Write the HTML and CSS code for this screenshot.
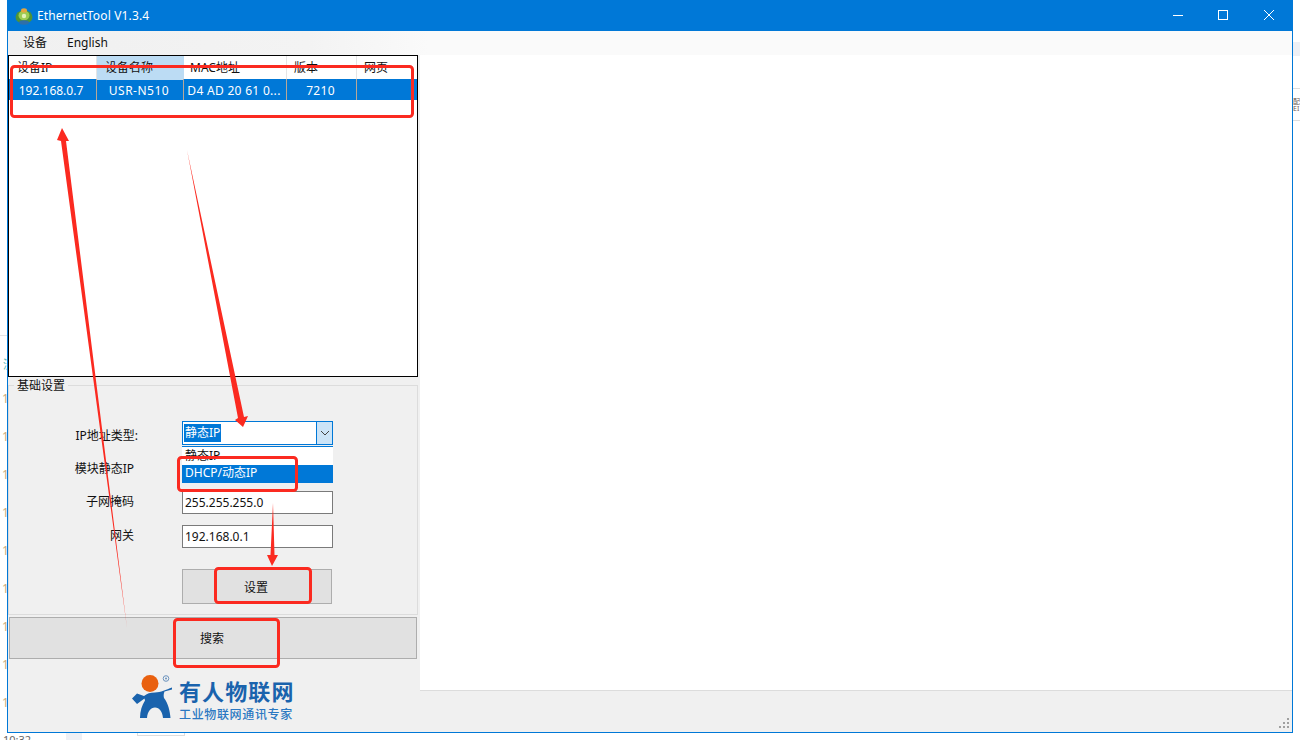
FILE: index.html
```html
<!DOCTYPE html>
<html lang="zh">
<head>
<meta charset="utf-8">
<title>EthernetTool V1.3.4</title>
<link rel="stylesheet" href="styles.css">
</head>
<body>
<div class="desktop">
  <div class="bg-nums">
    <span>1</span><span>1</span><span>1</span><span>1</span><span>1</span><span>1</span><span>1</span><span>1</span><span>1</span>
  </div>
  <span class="bg-glyph">済</span>
  <span class="bg-time">10:32</span>
  <div class="bg-tab"></div>
  <div class="bg-box"></div>
  <div class="bg-right-tab"></div>
  <div class="bg-right-line one"></div>
  <div class="bg-right-text">配置<br>EI</div>
  <div class="bg-right-line two"></div>
  <div class="bg-left-line"></div>

  <div class="window">
    <header class="titlebar">
      <svg class="app-icon" width="18" height="18" viewBox="0 0 18 18">
        <ellipse cx="9" cy="10" rx="8.500" ry="6.800" fill="#4f9436"/>
        <ellipse cx="9" cy="8.500" rx="5.500" ry="4.800" fill="#9ccc52"/>
        <ellipse cx="9" cy="3.400" rx="3" ry="2.200" fill="#e3a63f"/>
        <ellipse cx="9" cy="15.500" rx="5" ry="2.200" fill="#2f6fa8"/>
        <circle cx="9" cy="9" r="2.200" fill="#e2f2b8"/>
      </svg>
      <span class="title">EthernetTool V1.3.4</span>
      <div class="win-controls">
        <svg width="46" height="31" viewBox="0 0 46 31"><path d="M19 15.500H29" stroke="#fff" fill="none"/></svg>
        <svg width="46" height="31" viewBox="0 0 46 31"><rect x="18.500" y="10.500" width="9" height="9" stroke="#fff" fill="none"/></svg>
        <svg width="46" height="31" viewBox="0 0 46 31"><path d="M18 10L28 20M28 10L18 20" stroke="#fff" fill="none"/></svg>
      </div>
    </header>
    <nav class="menubar">
      <span class="menu-item">设备</span>
      <span class="menu-item">English</span>
    </nav>
    <div class="main">
      <aside class="left">
        <div class="list">
          <div class="list-row list-head">
            <span class="cell c1">设备IP</span>
            <span class="cell c2 active">设备名称</span>
            <span class="cell c3">MAC地址</span>
            <span class="cell c4">版本</span>
            <span class="cell c5">网页</span>
          </div>
          <div class="list-row list-sel">
            <span class="cell c1">192.168.0.7</span>
            <span class="cell c2">USR-N510</span>
            <span class="cell c3">D4 AD 20 61 0...</span>
            <span class="cell c4">7210</span>
            <span class="cell c5"></span>
          </div>
        </div>
        <section class="group">
          <span class="legend">基础设置</span>
          <div class="form">
            <span class="label wide">IP地址类型:</span>
            <div class="combo">
              <span class="combo-text"><span class="combo-sel">静态IP</span></span>
              <span class="combo-btn">
                <svg width="10" height="6" viewBox="0 0 10 6"><path d="M1 1L5 5L9 1" stroke="#444" fill="none"/></svg>
              </span>
              <div class="dropdown">
                <div class="opt">静态IP</div>
                <div class="opt on">DHCP/动态IP</div>
              </div>
            </div>
            <span class="label second">模块静态IP</span>
            <div class="field"></div>
            <span class="label">子网掩码</span>
            <div class="field">255.255.255.0</div>
            <span class="label">网关</span>
            <div class="field">192.168.0.1</div>
            <span></span>
            <div class="btn set-btn">设置</div>
          </div>
        </section>
        <div class="btn search-btn"><span class="search-label">搜索</span></div>
        <div class="logo">
          <svg class="logo-mark" width="46" height="46" viewBox="0 0 46 46">
            <path d="M42 12.500V14.500L34.500 16.500C33.500 19 33.500 21 34 23C38 28 40 36 40.500 43H33C32.500 37 29.500 32.500 25 32.500C20.500 32.500 17.500 37 17 43H10C10 36 12 30 15 25.500L14.500 23.500L7 29L2 23.500L7 18.500L14 21C17 18.500 20 17.500 25 17.500C31 17.500 36 14.500 42 12.500Z" fill="#1a63ad"/>
            <circle cx="20" cy="8.500" r="8.500" fill="#e9600f"/>
            <circle cx="36" cy="3.500" r="2.800" fill="none" stroke="#6c93bd" stroke-width="1"/>
            <circle cx="36" cy="3.500" r="1" fill="#6c93bd"/>
          </svg>
          <div class="logo-text">
            <div class="logo-main">有人物联网</div>
            <div class="logo-sub">工业物联网通讯专家</div>
          </div>
        </div>
      </aside>
      <div class="right">
        <div class="content"></div>
        <footer class="status">
          <svg class="grip" width="12" height="12" viewBox="0 0 12 12" fill="#a0a0a0">
            <rect x="8" y="0" width="2" height="2"/>
            <rect x="4" y="4" width="2" height="2"/><rect x="8" y="4" width="2" height="2"/>
            <rect x="0" y="8" width="2" height="2"/><rect x="4" y="8" width="2" height="2"/><rect x="8" y="8" width="2" height="2"/>
          </svg>
        </footer>
      </div>
    </div>
  </div>

  <svg class="marks" width="1300" height="740" viewBox="0 0 1300 740">
    <g fill="none" stroke="#fb2a20" stroke-width="3">
      <rect x="11.500" y="66.500" width="401" height="50" rx="3"/>
      <rect x="178.500" y="457.500" width="118" height="33" rx="3"/>
      <rect x="215.500" y="568.500" width="95" height="34" rx="3"/>
      <rect x="174.500" y="619.500" width="104" height="47" rx="3"/>
    </g>
    <g fill="#fb2a20">
      <path d="M127 628L66 141L69 141L62 128L57 140L61 141Z"/>
      <path d="M187 150L238 418L235 420L243 427L248 416L244 417Z"/>
      <path d="M273 503L270.500 555L267 555L272 566L278 555L274.500 555Z"/>
    </g>
  </svg>
</div>
</body>
</html>
```
FILE: styles.css
```css
* { box-sizing: border-box; }
html, body { margin: 0; padding: 0; }
body {
  font-family: "Noto Sans", "Noto Sans CJK SC", sans-serif;
  font-size: 12px;
  color: #111;
  background: #fff;
}
.desktop {
  position: relative;
  width: 1300px;
  height: 740px;
  overflow: hidden;
  background: #fff;
}

/* what shows of the windows behind */
.bg-nums {
  position: absolute;
  left: 2px;
  top: 391px;
  display: flex;
  flex-direction: column;
  gap: 22px;
  color: #c9ab80;
  font-size: 12px;
  line-height: 16px;
}
.bg-glyph { position: absolute; left: 3px; top: 357px; width: 5px; overflow: hidden; color: #55b3b0; font-size: 12px; line-height: 16px; }
.bg-time { position: absolute; left: 3px; top: 733px; color: #666; font-size: 11px; line-height: 14px; }
.bg-tab { position: absolute; left: 66px; top: 733px; width: 16px; height: 7px; background: #eef0f5; }
.bg-box { position: absolute; left: 137px; top: 733px; width: 48px; height: 3px; border: 1px solid #ddd; border-top: 0; }
.bg-right-tab { position: absolute; left: 1293px; top: 42px; width: 7px; height: 14px; background: #eef0f5; }
.bg-right-line { position: absolute; left: 1293px; width: 7px; height: 1px; background: #ddd; }
.bg-right-line.one { top: 88px; }
.bg-right-line.two { top: 120px; }
.bg-right-text { position: absolute; left: 1293px; top: 98px; width: 7px; overflow: hidden; white-space: nowrap; font-size: 7px; line-height: 7px; color: #6b5a50; }
.bg-left-line { position: absolute; left: 0; top: 335px; width: 7px; height: 1px; background: #e4e4e4; }

/* window */
.window {
  position: absolute;
  left: 7px;
  top: 0;
  width: 1286px;
  height: 733px;
  display: flex;
  flex-direction: column;
  border: 1px solid #0078d7;
  border-top: 0;
  background: #f0f0f0;
}
.titlebar {
  height: 31px;
  flex: none;
  display: flex;
  align-items: center;
  padding-left: 7px;
  background: #0078d7;
  color: #fff;
}
.app-icon { flex: none; }
.title { margin-left: 4px; font-size: 12px; letter-spacing: .15px; }
.win-controls { margin-left: auto; display: flex; }
.win-controls svg { display: block; }
.menubar {
  height: 24px;
  flex: none;
  display: flex;
  align-items: center;
  padding-left: 7px;
  background: linear-gradient(to right, #f0f0f0 0, #f3f3f3 300px, #fafafa 420px);
}
.menu-item { padding: 0 8px; margin-right: 4px; line-height: 22px; }
.main { flex: 1; display: flex; min-height: 0; }
.left { width: 412px; flex: none; display: flex; flex-direction: column; }
.right { flex: 1; display: flex; flex-direction: column; min-width: 0; }
.content { flex: 1; background: #fff; }
.status {
  position: relative;
  height: 42px;
  flex: none;
  background: #f0f0f0;
  border-top: 1px solid #dcdcdc;
}
.grip { position: absolute; right: 1px; bottom: 2px; }

/* device list */
.list {
  width: 410px;
  height: 322px;
  flex: none;
  border: 1px solid #000;
  background: #fff;
}
.list-row { display: grid; grid-template-columns: 88px 87px 103px 70px 60px; }
.list-head { height: 23px; }
.list-head .cell { padding-left: 8px; line-height: 24px; border-right: 1px solid #e5e5e5; }
.list-head .cell.c3 { padding-left: 6px; }
.list-head .cell.c4, .list-head .cell.c5 { padding-left: 7px; }
.list-head .cell.c5 { border-right: 0; }
.list-head .cell.active { background: #bcdcf4; border-right: 0; }
.list-sel { height: 21px; background: #0078d7; color: #fff; }
.list-sel .cell {
  padding-right: 2px;
  line-height: 23px;
  letter-spacing: .3px;
  text-align: center;
  border-right: 1px solid #b8a898;
  white-space: nowrap;
  overflow: hidden;
}
.list-sel .cell.c1 { padding-right: 3px; letter-spacing: 0; }
.list-sel .cell.c2 { letter-spacing: .5px; }
.list-sel .cell.c5 { border-right: 0; }

/* settings group */
.group {
  position: relative;
  height: 230px;
  margin-top: 8px;
  flex: none;
  width: 410px;
  border: 1px solid #dcdcdc;
}
.legend {
  position: absolute;
  left: 5px;
  top: -7px;
  padding: 0 3px;
  background: #f0f0f0;
  line-height: 14px;
}
.form {
  display: grid;
  grid-template-columns: 173px 151px;
  grid-template-rows: 24px 24px 23px 23px 35px;
  row-gap: 11px;
  padding-top: 35px;
}
.label { justify-self: end; padding-right: 48px; line-height: 18px; padding-top: 2px; white-space: nowrap; }
.label.wide { padding-right: 44px; padding-top: 6px; }
.label.second { padding-top: 4px; }
.field {
  height: 23px;
  padding-left: 2px;
  line-height: 22px;
  background: #fff;
  border: 1px solid #7a7a7a;
}
.combo {
  position: relative;
  display: flex;
  height: 24px;
  border: 1px solid #0078d7;
  background: #fff;
}
.combo-text { flex: 1; padding: 2px 1px; line-height: 18px; }
.combo-sel { display: inline-block; padding: 0 1px; background: #0078d7; color: #fff; line-height: 18px; }
.combo-btn {
  flex: none;
  width: 16px;
  display: flex;
  align-items: center;
  justify-content: center;
  background: #cce4f7;
  border-left: 1px solid #0078d7;
}
.dropdown {
  position: absolute;
  left: -1px;
  right: -1px;
  top: 24px;
  border-top: 1px solid #0078d7;
  background: #fff;
}
.opt { height: 18px; padding-left: 3px; line-height: 17px; }
.opt.on { background: #0078d7; color: #fff; line-height: 16px; }
.btn { background: #e1e1e1; border: 1px solid #adadad; }
.set-btn {
  width: 150px;
  height: 35px;
  margin-top: 10px;
  display: flex;
  align-items: center;
  justify-content: center;
  padding-right: 2px;
}
.search-btn {
  width: 408px;
  height: 42px;
  flex: none;
  margin: 2px 0 0 1px;
  padding: 11px 0 0 190px;
  line-height: 20px;
}

/* logo */
.logo { display: flex; align-items: flex-start; margin: 16px 0 0 122px; }
.logo-mark { flex: none; }
.logo-text { margin-left: 3px; color: #1a63ad; }
.logo-main { font-family: "Noto Sans CJK SC", sans-serif; font-size: 22px; font-weight: 700; line-height: 30px; letter-spacing: 1.1px; white-space: nowrap; }
.logo-sub { margin-top: 0; font-family: "Noto Sans CJK SC", sans-serif; font-size: 12px; font-weight: 500; line-height: 18px; color: #2a78c2; letter-spacing: .65px; white-space: nowrap; }

/* hand-drawn annotations over the screenshot */
.marks { position: absolute; left: 0; top: 0; pointer-events: none; }
```
